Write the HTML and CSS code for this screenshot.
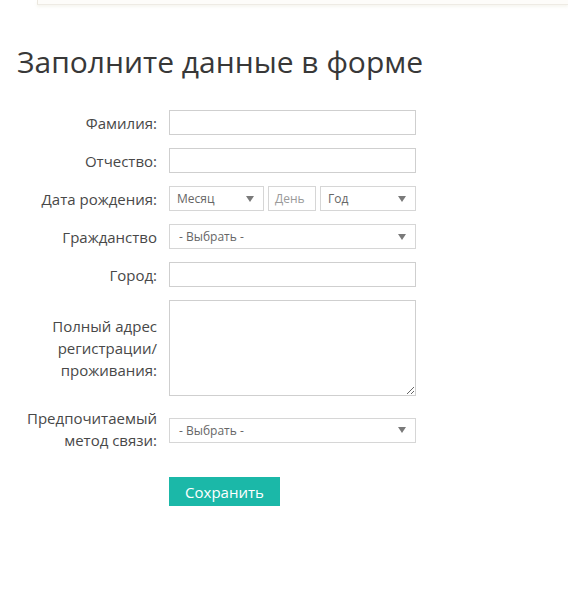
FILE: index.html
```html
<!DOCTYPE html>
<html lang="ru">
<head>
<meta charset="utf-8">
<link rel="stylesheet" href="styles.css">
</head>
<body>
<div class="topbar"></div>
<h1 class="title">Заполните данные в форме</h1>
<form class="form">
  <label class="lbl">Фамилия:</label>
  <input class="field" type="text">

  <label class="lbl">Отчество:</label>
  <input class="field" type="text">

  <label class="lbl">Дата рождения:</label>
  <div class="date">
    <div class="sel month"><span>Месяц</span><svg class="arr" width="8" height="6" viewBox="0 0 8 6"><path d="M0 0H8L4 6Z" fill="#7a7a7a"/></svg></div>
    <div class="sel day"><span class="ph">День</span></div>
    <div class="sel year"><span>Год</span><svg class="arr" width="8" height="6" viewBox="0 0 8 6"><path d="M0 0H8L4 6Z" fill="#7a7a7a"/></svg></div>
  </div>

  <label class="lbl">Гражданство</label>
  <div class="sel"><span>- Выбрать -</span><svg class="arr" width="8" height="6" viewBox="0 0 8 6"><path d="M0 0H8L4 6Z" fill="#7a7a7a"/></svg></div>

  <label class="lbl">Город:</label>
  <input class="field" type="text">

  <label class="lbl">Полный адрес<br>регистрации/<br>проживания:</label>
  <textarea class="area"></textarea>

  <label class="lbl lbl-two">Предпочитаемый<br>метод связи:</label>
  <div class="sel"><span>- Выбрать -</span><svg class="arr" width="8" height="6" viewBox="0 0 8 6"><path d="M0 0H8L4 6Z" fill="#7a7a7a"/></svg></div>

  <span></span>
  <div class="actions"><button class="btn" type="button">Сохранить</button></div>
</form>
</body>
</html>
```
FILE: styles.css
```css
html, body {
  margin: 0;
  padding: 0;
  background: #fff;
}
body {
  font-family: "Open Sans", "Liberation Sans", sans-serif;
  color: #444;
}
.topbar {
  margin-left: 37px;
  height: 4px;
  border-left: 1px solid #ebe7de;
  border-bottom: 1px solid #eeebe4;
  background: #fdfcf9;
  box-shadow: 0 2px 3px rgba(230, 225, 210, 0.35);
}
.title {
  margin: 36px 0 0 17px;
  font-size: 30px;
  font-weight: 400;
  line-height: 41px;
  color: #383838;
}
.form {
  display: grid;
  grid-template-columns: 140px 247px;
  column-gap: 12px;
  row-gap: 13px;
  align-items: center;
  padding-left: 17px;
  margin-top: 28px;
}
.lbl {
  text-align: right;
  font-size: 15px;
  line-height: 22px;
  color: #484848;
}
.lbl-two {
  margin-top: -2px;
}
.field {
  box-sizing: border-box;
  height: 25px;
  width: 100%;
  margin: 0;
  border: 1px solid #cfcfcf;
  background: #fff;
  padding: 0 6px;
  font-family: inherit;
}
.area {
  box-sizing: border-box;
  height: 96px;
  width: 100%;
  margin: 0;
  border: 1px solid #cfcfcf;
  background: #fff;
  font-family: inherit;
  display: block;
}
.date {
  display: flex;
  gap: 4px;
}
.sel {
  box-sizing: border-box;
  height: 25px;
  border: 1px solid #d6d6d6;
  background: #fff;
  display: flex;
  align-items: center;
  justify-content: space-between;
  padding: 0 9px 0 9px;
  font-size: 12px;
  color: #666;
}
.sel .arr {
  flex: none;
}
.month {
  width: 95px;
  padding-left: 7px;
}
.day {
  width: 48px;
  padding-left: 6px;
}
.day .ph {
  color: #9a9a9a;
}
.year {
  width: 96px;
  padding-left: 7px;
}
.actions {
  padding-top: 13px;
}
.btn {
  width: 111px;
  height: 29px;
  border: 0;
  margin: 0;
  background: #1bb8a8;
  color: #fff;
  font-family: inherit;
  font-size: 15px;
  padding: 0;
  display: block;
}
```
